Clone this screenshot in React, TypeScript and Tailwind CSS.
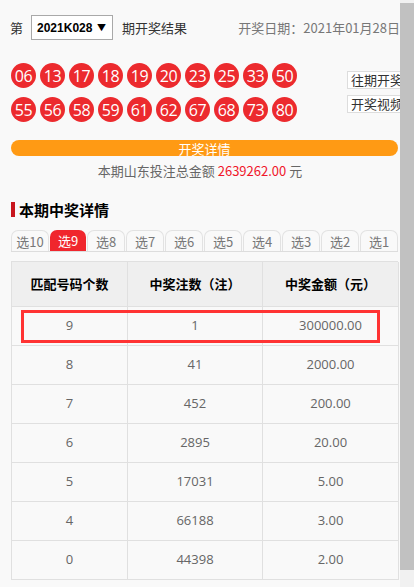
import React from "react";

const row1 = ["06", "13", "17", "18", "19", "20", "23", "25", "33", "50"];
const row2 = ["55", "56", "58", "59", "61", "62", "67", "68", "73", "80"];
const tabs = ["选10", "选9", "选8", "选7", "选6", "选5", "选4", "选3", "选2", "选1"];
const rows = [
  ["9", "1", "300000.00"],
  ["8", "41", "2000.00"],
  ["7", "452", "200.00"],
  ["6", "2895", "20.00"],
  ["5", "17031", "5.00"],
  ["4", "66188", "3.00"],
  ["0", "44398", "2.00"],
];

function Ball({ n }: { n: string }) {
  return (
    <div className="w-[25px] h-[25px] rounded-full bg-[#ec2a2e] text-white flex items-center justify-center text-[16px] leading-none shrink-0 font-['Open_Sans','Noto_Sans_CJK_SC',sans-serif] tracking-[-0.5px]">
      {n}
    </div>
  );
}

export default function App() {
  return (
    <div className="w-[414px] h-[587px] flex overflow-hidden bg-[#f9f9f9] font-['Noto_Sans_CJK_SC','Noto_Sans',sans-serif]">
      <div className="w-[400px] shrink-0 overflow-hidden">
        <div className="w-[420px]">
          {/* header */}
          <div className="flex items-center h-[25px] mt-[15px] pl-[10px] w-[400px]">
            <span className="text-[13px] text-[#333] leading-none">第</span>
            <div className="ml-[8px] w-[82px] h-[25px] border border-[#a9a9a9] bg-white flex items-center pl-[5px] pr-[6px] justify-between">
              <span className="text-[12px] font-bold text-black font-['Liberation_Sans',sans-serif]">2021K028</span>
              <span className="text-[9px] text-black">▼</span>
            </div>
            <span className="ml-[9px] text-[13px] text-[#333] leading-none">期开奖结果</span>
            <span className="ml-auto text-[13px] text-[#777] leading-none">开奖日期：2021年01月28日</span>
          </div>

          {/* balls */}
          <div className="flex items-start mt-[23px] pl-[11px]">
            <div className="flex flex-col gap-[9px]">
              <div className="flex gap-[4px]">
                {row1.map((n) => (
                  <Ball key={n} n={n} />
                ))}
              </div>
              <div className="flex gap-[4px]">
                {row2.map((n) => (
                  <Ball key={n} n={n} />
                ))}
              </div>
            </div>
            <div className="ml-[50px] mt-[8px] flex flex-col gap-[6px] shrink-0">
              <div className="h-[18px] border border-[#ddd] bg-white px-[3px] text-[13px] text-[#333] leading-[16px] whitespace-nowrap">往期开奖</div>
              <div className="h-[18px] border border-[#ddd] bg-white px-[3px] text-[13px] text-[#333] leading-[16px] whitespace-nowrap">开奖视频</div>
            </div>
          </div>

          {/* orange bar */}
          <div className="ml-[11px] mt-[18px] w-[387px] h-[16px] rounded-full bg-[#ff9a14] flex items-center justify-center text-white text-[13px] leading-none">
            开奖详情
          </div>
          <div className="w-[400px] mt-[7px] text-center text-[13px] text-[#666] leading-[16px]">
            本期山东投注总金额 <span className="text-[#f0162a]">2639262.00</span> 元
          </div>

          {/* section title */}
          <div className="flex items-center ml-[11px] mt-[22px] h-[16px]">
            <div className="w-[4px] h-[15px] bg-[#c8161e]" />
            <span className="ml-[4px] text-[15px] font-bold text-black leading-none">本期中奖详情</span>
          </div>

          {/* tabs */}
          <div className="ml-[11px] mt-[13px] w-[387px] flex gap-[1px] border-b border-[#ddd]">
            {tabs.map((t) => (
              <div
                key={t}
                className={
                  t === "选9"
                    ? "flex-1 h-[21px] rounded-t-[7px] bg-[#f0262d] text-white text-[13px] flex items-center justify-center leading-none"
                    : "flex-1 h-[21px] rounded-t-[7px] border border-b-0 border-[#e2e2e2] bg-[#f9f9f9] text-[#777] text-[13px] flex items-center justify-center leading-none"
                }
              >
                {t}
              </div>
            ))}
          </div>

          {/* table */}
          <div className="relative ml-[11px] mt-[9px] w-[387px]">
            <div className="grid grid-cols-[116px_135px_136px] border-t border-l border-[#e0e0e0]">
              {["匹配号码个数", "中奖注数（注）", "中奖金额（元）"].map((h) => (
                <div key={h} className="h-[45px] bg-[#efefef] border-r border-b border-[#e0e0e0] flex items-center justify-center text-[13px] font-bold text-black">
                  {h}
                </div>
              ))}
              {rows.map((r) =>
                r.map((c, i) => (
                  <div key={r[0] + "-" + i} className="h-[39px] border-r border-b border-[#e0e0e0] flex items-center justify-center text-[13px] text-[#666] font-['Open_Sans','Noto_Sans_CJK_SC',sans-serif]">
                    {c}
                  </div>
                ))
              )}
            </div>
            <div className="absolute left-[10px] top-[49px] w-[359px] h-[33px] border-[3px] border-[#ff3333]" />
          </div>
        </div>
      </div>
      <div className="w-[14px] h-[587px] bg-[#f1f1f1] pt-[3px]">
        <div className="w-[14px] h-[567px] bg-[#c1c1c1]" />
      </div>
    </div>
  );
}
